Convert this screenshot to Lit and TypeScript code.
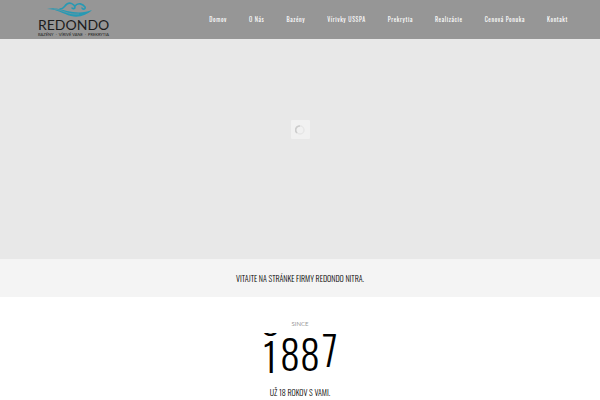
import { LitElement, html, css } from "lit";
import { customElement } from "lit/decorators.js";

const LINKS = ["Domov", "O Nás", "Bazény", "Vírivky USSPA", "Prekrytia", "Realizácie", "Cenová Ponuka", "Kontakt"];

@customElement("year-counter")
class YearCounter extends LitElement {
  static styles = css`
    :host { display: flex; justify-content: center; height: 40px; overflow: hidden; }
    .reel { width: 20px; height: 40px; overflow: hidden; text-align: center; color: #000; font-size: 40px; line-height: 40px; font-weight: 300; }
    .digit { display: block; height: 40px; }
    .rolling { margin-top: -35px; height: 38px; }
    .leaving { margin-top: -4px; }
  `;
  render() {
    return html`
      <div class="reel"><span class="digit rolling">0</span><span class="digit">1</span></div>
      <div class="reel"><span class="digit">8</span></div>
      <div class="reel"><span class="digit">8</span></div>
      <div class="reel"><span class="digit leaving">7</span></div>
    `;
  }
}

@customElement("app-root")
class AppRoot extends LitElement {
  static styles = css`
    :host { display: block; min-height: 100vh; background: #fff; color: #000; font-family: Oswald, "Roboto Condensed", "Liberation Sans Narrow", "Liberation Sans", sans-serif; }
    header { display: flex; justify-content: space-between; align-items: center; height: 39px; padding: 0 32px 0 38px; background: #969696; }
    .logo { display: flex; flex-direction: column; width: 71px; color: #1c1c1c; text-decoration: none; font-family: Lato, sans-serif; }
    .waves { display: block; width: 50px; height: 17px; margin-left: 7px; }
    .name { font-size: 14px; line-height: 14px; white-space: nowrap; }
    .tag { display: flex; justify-content: space-between; font-size: 4px; line-height: 6px; white-space: nowrap; }
    nav { display: flex; gap: 22px; }
    nav a { color: #fff; font-size: 6px; line-height: 12px; font-weight: 450; letter-spacing: 0.1em; text-decoration: none; white-space: nowrap; }
    .hero { display: flex; justify-content: center; align-items: flex-start; box-sizing: border-box; height: 220px; padding-top: 81px; background: #e8e8e8; }
    .loader { display: grid; place-items: center; width: 19px; height: 19px; background: #f1f1f1; border-radius: 1px; }
    .loader svg { display: block; width: 10px; height: 10px; }
    .welcome { margin: 0; padding: 11px 0; background: #f4f4f4; text-align: center; font-size: 8px; line-height: 16px; font-weight: 350; }
    .since { padding-top: 21px; text-align: center; }
    .label { margin: 0 0 3px; color: #999; font-family: Lato, sans-serif; font-size: 6px; line-height: 12px; }
    .years { margin: 0; padding-top: 12px; font-size: 8px; line-height: 15px; font-weight: 350; }
  `;
  render() {
    return html`
      <header>
        <a class="logo" href="#" aria-label="Redondo">
          <svg class="waves" viewBox="0 0 50 17" aria-hidden="true">
            <path d="M2 8C9 6 15 8 22 10C31 12 40 12 47 9C42 14 34 17 26 15C18 13 12 8 2 8Z" fill="#2899b3"/>
            <path d="M15 8C19 8 19 5 22 3C25 1 29 3 30 6C30 8 28 8 27 7M30 5C33 1 38 3 40 6C41 8 38 9 37 7" fill="none" stroke="#2899b3" stroke-width="1.6" stroke-linecap="round"/>
            <path d="M9 8C18 9 23 14 34 13" fill="none" stroke="#969696" stroke-width="0.5"/>
          </svg>
          <span class="name">REDONDO</span>
          <span class="tag"><span>BAZÉNY</span><span>·</span><span>VÍRIVÉ VANE</span><span>·</span><span>PREKRYTIA</span></span>
        </a>
        <nav>${LINKS.map((t) => html`<a href="#">${t}</a>`)}</nav>
      </header>
      <main>
        <section class="hero">
          <div class="loader" role="status" aria-label="Loading">
            <svg viewBox="0 0 10 10"><circle cx="5" cy="5" r="4" fill="none" stroke="#e6e6e6" stroke-width="1.5"/><path d="M2 8A4 4 0 0 1 5 1" fill="none" stroke="#ccc" stroke-width="1.5"/></svg>
          </div>
        </section>
        <h2 class="welcome">VITAJTE NA STRÁNKE FIRMY REDONDO NITRA.</h2>
        <section class="since">
          <p class="label">SINCE</p>
          <year-counter></year-counter>
          <h3 class="years">UŽ 18 ROKOV S VAMI.</h3>
        </section>
      </main>
    `;
  }
}
